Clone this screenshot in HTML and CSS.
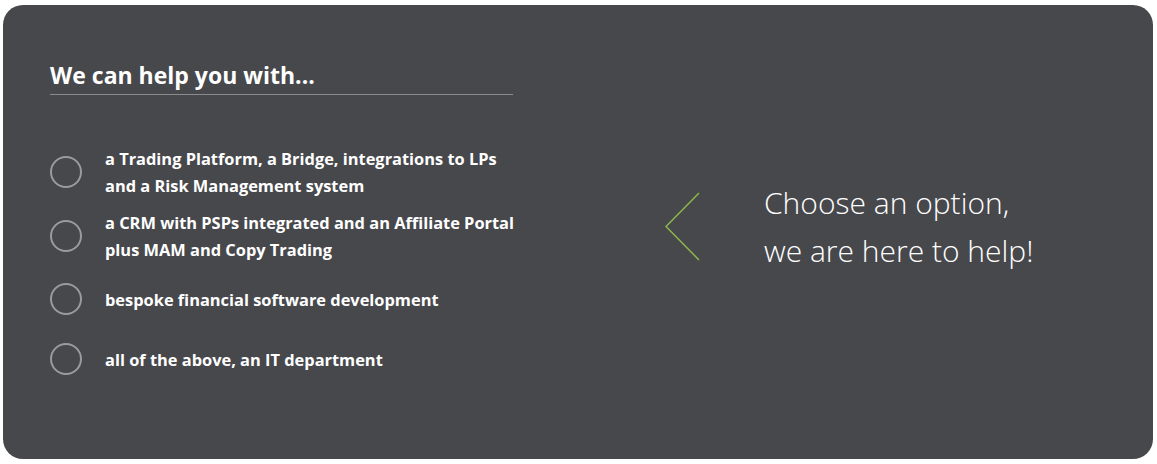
FILE: index.html
```html
<!DOCTYPE html>
<html lang="en">
<head>
    <meta charset="UTF-8">
    <meta name="viewport" content="width=device-width, initial-scale=1.0">
    <title>We can help you with</title>
    <link rel="stylesheet" href="styles.css">
</head>
<body>

    <div class="card">
        <!-- Options -->
        <div class="options">
            <h2 class="options-title">We can help you with...</h2>
            <ul class="option-list">
                <li class="option option-tall">
                    <span class="radio"></span>
                    <span class="option-text">a Trading Platform, a Bridge, integrations to LPs<br>and a Risk Management system</span>
                </li>
                <li class="option option-tall">
                    <span class="radio"></span>
                    <span class="option-text">a CRM with PSPs integrated and an Affiliate Portal<br>plus MAM and Copy Trading</span>
                </li>
                <li class="option">
                    <span class="radio"></span>
                    <span class="option-text">bespoke financial software development</span>
                </li>
                <li class="option option-last">
                    <span class="radio"></span>
                    <span class="option-text">all of the above, an IT department</span>
                </li>
            </ul>
        </div>

        <!-- Prompt -->
        <div class="prompt">
            <svg class="chevron" width="36" height="70" viewBox="0 0 36 70">
                <polyline points="34,1 1,34.5 34,68" fill="none" stroke="#8db64a" stroke-width="1.5"/>
            </svg>
            <p class="prompt-text">Choose an option,<br>we are here to help!</p>
        </div>
    </div>

</body>
</html>
```

FILE: styles.css
```css
body {
    margin: 0;
    padding: 5px 4px 5px 3px;
    background-color: #fff;
    font-family: "Open Sans", Arial, sans-serif;
}
.card {
    display: flex;
    align-items: flex-start;
    height: 454px;
    box-sizing: border-box;
    padding: 55px 0 0 47px;
    background-color: #47484c;
    border-radius: 20px;
    color: #fff;
}
.options {
    flex: none;
    width: 463px;
}
.options-title {
    margin: 0;
    padding-bottom: 3px;
    border-bottom: 1px solid #8a8b8e;
    font-size: 23px;
    font-weight: 700;
    line-height: 31px;
}
.option-list {
    list-style: none;
    margin: 45px 0 0 0;
    padding: 0;
}
.option {
    display: flex;
    align-items: center;
    height: 62px;
}
.option-tall {
    height: 64px;
}
.option-last {
    height: 58px;
}
.radio {
    flex: none;
    width: 28px;
    height: 28px;
    border: 2px solid #9a9b9e;
    border-radius: 50%;
    margin-right: 23px;
}
.option-text {
    font-size: 16.4px;
    font-weight: 700;
    line-height: 27px;
    white-space: nowrap;
}
.prompt {
    display: flex;
    align-items: center;
    margin: 119px 0 0 152px;
}
.chevron {
    display: block;
    flex: none;
}
.prompt-text {
    margin: 0 0 0 63px;
    font-size: 30px;
    font-weight: 300;
    line-height: 48px;
    white-space: nowrap;
}
```
